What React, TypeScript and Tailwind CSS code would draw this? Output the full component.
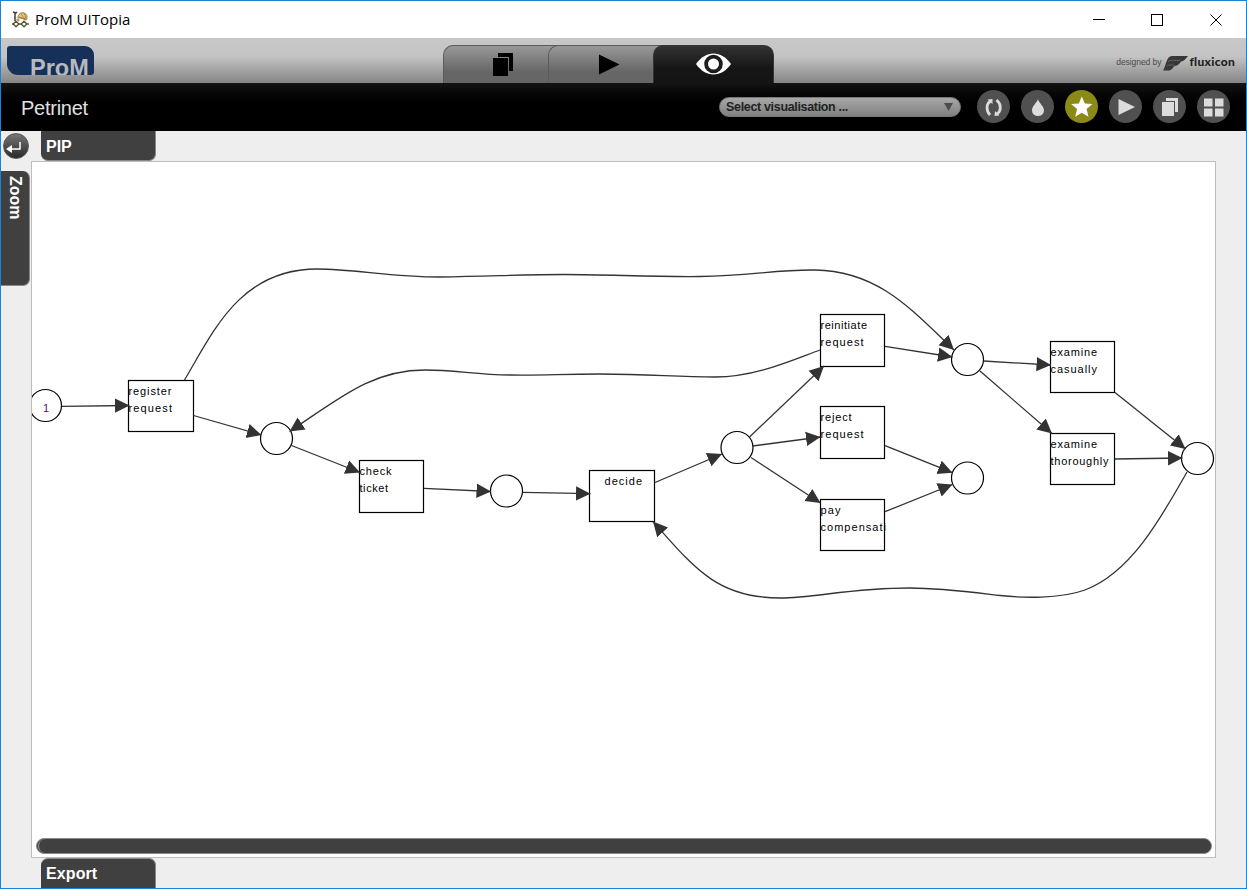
import { type ReactNode } from "react";
import clsx from "clsx";

type Label = { text: string; width: number; dx?: number };

const transitions: { x: number; y: number; w: number; h: number; lines: Label[] }[] = [
  { x: 128.5, y: 380.5, w: 65, h: 51, lines: [{ text: "register", width: 43 }, { text: "request", width: 43.5 }] },
  { x: 359.5, y: 460.5, w: 64, h: 52, lines: [{ text: "check", width: 32 }, { text: "ticket", width: 28.5 }] },
  { x: 589.5, y: 470.5, w: 65, h: 51, lines: [{ text: "decide", width: 37.5, dx: 15 }] },
  { x: 820.5, y: 314.5, w: 64, h: 52, lines: [{ text: "reinitiate", width: 46.5 }, { text: "request", width: 43 }] },
  { x: 820.5, y: 406.5, w: 64, h: 52, lines: [{ text: "reject", width: 31 }, { text: "request", width: 43 }] },
  { x: 820.5, y: 499.5, w: 64, h: 51, lines: [{ text: "pay", width: 20 }, { text: "compensati", width: 65.5 }] },
  { x: 1050.5, y: 341.5, w: 64, h: 51, lines: [{ text: "examine", width: 46.5 }, { text: "casually", width: 46.5 }] },
  { x: 1050.5, y: 433.5, w: 64, h: 51, lines: [{ text: "examine", width: 46.5 }, { text: "thoroughly", width: 58 }] },
];

const places = [
  [45.5, 405.5],
  [276.5, 438.5],
  [506.5, 491],
  [737, 447.5],
  [967.5, 359.5],
  [967.5, 478],
  [1197.5, 458.5],
];

const arcs = [
  "M62 406.3L129.500 405.500",
  "M193.500 415.500L261.500 435",
  "M291.500 445.500L360 472.500",
  "M424 488.300L491 491.500",
  "M522.500 492.300L590.500 493.700",
  "M655 482.500L722 454",
  "M749.500 437L824 366",
  "M752.500 446L820.500 437",
  "M751 457.500L820.500 503",
  "M885 346.300L952.500 357",
  "M885 445.700L952.500 472.700",
  "M885 511.700L952.500 484.500",
  "M983.500 361L1051 365",
  "M980 371L1052 433.500",
  "M1115 392.500L1185.500 449",
  "M1115 459L1182.500 458",
  "M184.500 380C213 332 240 269 317 269C355 269 390 277 440 277C490 276.500 520 274.500 565 274.500C610 274.500 650 277 700 276.500C750 276 775 269.500 815 270C878 271 911 309 954 350",
  "M820 350C790 361 755 377 715 377C675 377 650 374 600 374C560 374 545 375.500 510 375C475 374.500 455 370 425 370C372 370 340 398 289.500 431.500",
  "M1187 472C1160 520 1130 573 1085 590C1060 599 1022 598 1000 595.500C970 592 940 588 910 588C850 588 815 598 780 598C718 598 695 569 653 521.500",
];

function TitleBar() {
  return (
    <div className="flex h-[37px] shrink-0 items-center bg-white pl-[11px]">
      <svg width="17" height="17" viewBox="0 0 17 17" fill="none">
        <path d="M1 1l3 1 1-1M3 2v8" stroke="#4a3b2c" strokeWidth="1.500" />
        <path d="M6 7c0-4 3-6 6-5 3 1 4 4 2 7l-5-2z" fill="#e3c878" stroke="#9a7a3c" />
        <path d="M9 3l4 5M12 2l2 5M7 6l7 2" stroke="#8d6b35" strokeWidth=".6" />
        <path d="M4 10.200L6.800 13 4 15.800 1.200 13zM12 10.200l2.800 2.800-2.800 2.800L9.200 13z" fill="#fff" stroke="#55552c" strokeWidth="1.300" />
        <path d="M0 13h1.500M6.500 13h3M14.500 13H17" stroke="#222" />
        <path d="M5 8l2 2" stroke="#b98a2e" strokeWidth="2" />
      </svg>
      <span className="ml-[6px] font-['Open_Sans',sans-serif] text-[15px] text-black">ProM UITopia</span>
      <svg className="ml-auto mr-[22px]" width="132" height="14" viewBox="0 0 132 14" fill="none" stroke="#000" shapeRendering="crispEdges">
        <path d="M1 6.500h12" />
        <rect x="59.500" y="1.500" width="11" height="11" />
        <path d="M118.500 1.500l11 11M129.500 1.500l-11 11" shapeRendering="auto" />
      </svg>
    </div>
  );
}

function Tab({ active, className, children }: { active?: boolean; className?: string; children: ReactNode }) {
  return (
    <div
      className={clsx(
        "flex h-[38px] justify-center border border-b-0",
        active
          ? "rounded-t-[10px] border-[#343434] bg-linear-to-b from-[#333] via-[#161616] via-60% to-[#141414]"
          : "rounded-tl-[10px] border-r-0 border-[#5c5c5c] bg-linear-to-b from-[#999] via-[#666] via-70% to-[#666]",
        className,
      )}
    >
      {children}
    </div>
  );
}

function Header() {
  return (
    <div className="flex h-[45px] shrink-0 bg-linear-to-b from-[#c8c8c8] via-[#c4c4c4] via-40% to-[#868686] to-100%">
      <div className="ml-[6px] mt-[8px] h-[29px] w-[87px] overflow-hidden rounded-[3px] rounded-tr-[9px] rounded-bl-[11px] bg-[#17305a] pl-[23px] pt-[9px] font-['Liberation_Sans',sans-serif] text-[23.500px] font-bold leading-[27px] text-[#b8b9bd]">
        ProM
      </div>
      {/* the tabs overlap, so each one's rounded corner sits on its neighbour */}
      <div className="ml-[349px] mt-[7px] flex">
        <Tab className="w-[115px] pl-[5px]">
          <svg className="mt-[7px]" width="21" height="24" viewBox="0 0 21 24">
            <path d="M5 0h15v18h-4V4H5z" fill="#000" />
            <path d="M0 5h15v18H0z" fill="#000" />
          </svg>
        </Tab>
        <Tab className="-ml-[10px] w-[115px] pl-[7px]">
          <svg className="mt-[8px]" width="21" height="21" viewBox="0 0 21 21">
            <path d="M0 .5l20.500 10-20.500 10z" fill="#000" />
          </svg>
        </Tab>
        <Tab active className="-ml-[10px] w-[121px]">
          <svg className="mt-[7px]" width="35" height="22" viewBox="0 0 35 22">
            <path d="M0 11C5 4 11 .5 17.500 .5S30 4 35 11C30 18 24 21.500 17.500 21.500S5 18 0 11z" fill="#fff" />
            <circle cx="17.500" cy="11" r="7.400" fill="#fff" stroke="#1d1d1d" strokeWidth="3.800" />
          </svg>
        </Tab>
      </div>
      <div className="ml-auto mr-[11px] flex h-[48px] items-center">
        <span className="font-['Liberation_Sans',sans-serif] text-[8.600px] tracking-[-0.1px] text-[#4a4a4a]">designed by</span>
        <svg className="ml-[2px] mt-[3px]" width="26" height="18" viewBox="0 0 26 18">
          <path d="M0 15.500C3 12 3 1 9 1h16c-2 2-3 5-7 5.500-1 1-2 4-6 4.500-2 .5-3 4.500-6 4.500z" fill="#373737" />
          <path d="M5 6.500c3-2 8-1 12-1M4 11c3-2 6-1 8 0" stroke="#777" strokeWidth=".7" fill="none" />
        </svg>
        <span className="-mt-[1px] font-['Lato',sans-serif] text-[12px] font-black tracking-[0.3px] text-[#222]">fluxicon</span>
      </div>
    </div>
  );
}

function RoundButton({ active, children }: { active?: boolean; children: ReactNode }) {
  return (
    <button className={clsx("flex size-[33px] items-center justify-center rounded-full", active ? "bg-[#8b8a17]" : "bg-[#505050]")}>
      <svg width="33" height="33" viewBox="0 0 33 33" fill="#dcdcdc">
        {children}
      </svg>
    </button>
  );
}

function Toolbar() {
  return (
    <div className="flex h-[48px] shrink-0 items-center bg-linear-to-b from-[#141414] via-black via-65% to-black pl-[20px] pr-[16px] font-['Liberation_Sans',sans-serif]">
      <h1 className="mt-[2px] text-[20px] tracking-[-0.25px] text-[#e0e0e0]">Petrinet</h1>
      <button className="ml-auto flex h-[20px] w-[242px] items-center justify-between rounded-full border border-[#777] bg-linear-to-b from-[#a8a8a8] to-[#808080] pl-[6px] pr-[7px] text-[12.500px] font-bold tracking-[-0.33px] text-[#222]">
        Select visualisation ...
        <svg className="-mt-px" width="9" height="8" viewBox="0 0 9 8">
          <path d="M0 0h9L4.500 8z" fill="#4c4c4c" />
        </svg>
      </button>
      <div className="-mt-px ml-[16px] flex gap-[11px]">
        <RoundButton>
          <path d="M13.500 11C9 14 9 21 13 25M19.500 10c5 4 5 11 .5 14" fill="none" stroke="#dcdcdc" strokeWidth="2.800" />
          <path d="M10.500 9.500l5-.5v5zM22.500 25.500l-5 .5.500-5z" />
        </RoundButton>
        <RoundButton>
          <path d="M17 9c.5 4 6 6.500 6 11.500a6 5.500 0 0 1-12 0C11 15.500 16 13 17 9z" />
        </RoundButton>
        <RoundButton active>
          <path fill="#fff" d="M16.800 6.500l3 7 7.700.6-5.900 5 1.900 7.700-6.700-4.100-6.600 4.100 1.900-7.700-6-5 7.700-.6z" />
        </RoundButton>
        <RoundButton>
          <path d="M9.500 9l16.500 8-16.500 8z" />
        </RoundButton>
        <RoundButton>
          <path d="M13 8h12v14h-3V11h-9z" />
          <path d="M9 12h12v14H9z" />
        </RoundButton>
        <RoundButton>
          <path d="M7 8.500h8.500v8H7zM18 8.500h8.500v8H18zM7 18.500h8.500v8H7zM18 18.500h8.500v8H18z" />
        </RoundButton>
      </div>
    </div>
  );
}

function PetriNet() {
  return (
    <svg className="block" width="1183" height="695" viewBox="32 162 1183 695" fill="none">
      <defs>
        <marker id="arrow" markerUnits="userSpaceOnUse" markerWidth="16" markerHeight="16" refX="14.500" refY="8" orient="auto">
          <path d="M0 .8L14.500 8L0 15.200z" fill="#333" />
        </marker>
      </defs>
      {places.map(([x, y], i) => (
        <circle key={i} cx={x} cy={y} r="16" fill="#fff" stroke="#000" strokeWidth="1.200" />
      ))}
      {transitions.map((t, i) => (
        <rect key={i} x={t.x} y={t.y} width={t.w} height={t.h} fill="#fff" stroke="#000" strokeWidth="1.200" />
      ))}
      {arcs.map((d) => (
        <path key={d} d={d} stroke="#333" strokeWidth="1.300" markerEnd="url(#arrow)" />
      ))}
      <g className="font-['Liberation_Sans',sans-serif] text-[11px] font-normal" fill="#000">
        {transitions.map((t) =>
          t.lines.map((line, n) => (
            <text key={`${t.x}-${t.y}-${n}`} x={t.x + (line.dx ?? 0)} y={t.y + 14.5 + n * 17.2} textLength={line.width}>
              {line.text}
            </text>
          )),
        )}
        <text x="43" y="412" fill="#5a1068">1</text>
      </g>
    </svg>
  );
}

export default function App() {
  return (
    <div className="flex h-[889px] w-[1247px] flex-col overflow-hidden border border-[#1883d7] bg-[#eee]">
      <TitleBar />
      <Header />
      <Toolbar />
      <div className="flex flex-1 font-['Liberation_Sans',sans-serif] text-[16px] font-bold text-white">
        <aside className="w-[30px] shrink-0">
          <button className="ml-[2px] mt-[2px] flex size-[26px] items-center justify-center rounded-full border border-[#555] bg-linear-to-b from-[#777] to-[#2b2b2b] pr-[4px] pt-[2px]">
            <svg width="16" height="13" viewBox="0 0 16 13">
              <path d="M14 1v7H4" fill="none" stroke="#fff" strokeWidth="1.500" />
              <path d="M0 8l6-4v8z" fill="#fff" />
            </svg>
          </button>
          <div className="mt-[12px] flex h-[115px] w-[29px] items-center rounded-r-[7px] border-b border-r border-[#888] bg-[#404040] pr-px pt-[5px] [writing-mode:vertical-rl]">
            Zoom
          </div>
        </aside>
        <main className="flex w-[1185px] flex-col">
          <div className="ml-[10px] h-[30px] w-[115px] rounded-b-[7px] border-b border-r border-[#888] bg-[#404040] pl-[5px] leading-[31px]">
            PIP
          </div>
          <div className="relative h-[697px] border border-[#bdbdbd] bg-white">
            <PetriNet />
            {/* horizontal scrollbar floats over the canvas */}
            <div className="absolute bottom-[3px] left-[4px] h-[16px] w-[1176px] rounded-full border border-[#8a8a8a] bg-[#404040]">
              <div className="ml-px h-full w-[20px] rounded-l-full border-l border-[#999]" />
            </div>
          </div>
          <div className="ml-[10px] h-[30px] w-[115px] rounded-t-[7px] border-r border-t border-[#888] bg-[#404040] pl-[5px] leading-[30px] tracking-[0.1px]">
            Export
          </div>
        </main>
      </div>
    </div>
  );
}
